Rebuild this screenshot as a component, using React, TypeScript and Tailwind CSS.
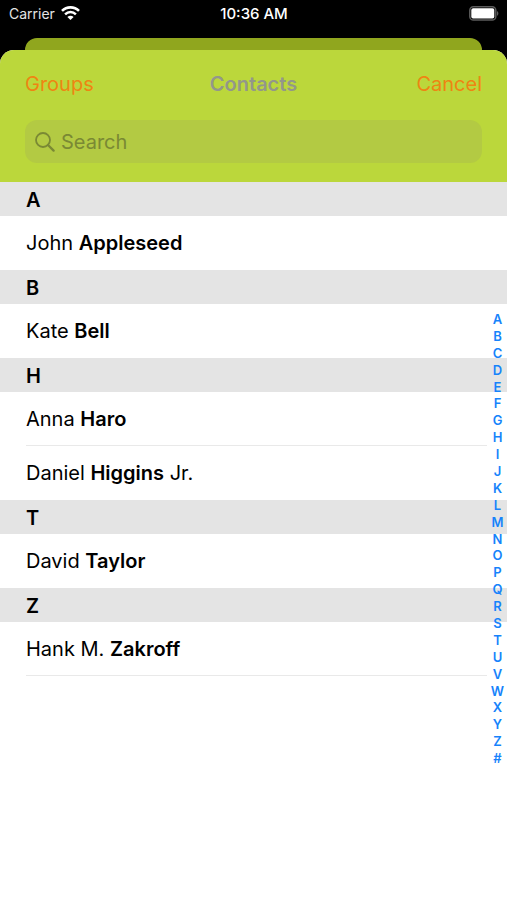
import React, { useState } from 'react';

interface Contact {
  first: string;
  last: string;
  suffix?: string;
}

interface Section {
  letter: string;
  contacts: Contact[];
}

const sections: Section[] = [
  { letter: 'A', contacts: [{ first: 'John', last: 'Appleseed' }] },
  { letter: 'B', contacts: [{ first: 'Kate', last: 'Bell' }] },
  {
    letter: 'H',
    contacts: [
      { first: 'Anna', last: 'Haro' },
      { first: 'Daniel', last: 'Higgins', suffix: 'Jr.' },
    ],
  },
  { letter: 'T', contacts: [{ first: 'David', last: 'Taylor' }] },
  { letter: 'Z', contacts: [{ first: 'Hank M.', last: 'Zakroff' }] },
];

const indexLetters = 'ABCDEFGHIJKLMNOPQRSTUVWXYZ#'.split('');

const WifiIcon = () => (
  <svg width="19" height="16" viewBox="0 0 19 16" fill="none" aria-hidden="true">
    <path d="M1 4.9C5.7 0.2 13.3 0.2 18 4.9" stroke="white" strokeWidth="2.6" />
    <path d="M4.1 8.3C7.2 5.3 11.8 5.3 14.9 8.3" stroke="white" strokeWidth="2.5" />
    <path d="M9.5 14L6.4 10.9C8.2 9.3 10.8 9.3 12.6 10.9Z" fill="white" />
  </svg>
);

const BatteryIcon = () => (
  <svg width="30" height="15" viewBox="0 0 30 15" fill="none" aria-hidden="true">
    <rect x="0.8" y="0.8" width="26" height="13.2" rx="3.6" stroke="#5c5c5c" strokeWidth="1.5" />
    <rect x="2.3" y="2.3" width="23" height="10.2" rx="1.8" fill="white" />
    <path d="M28 5C29.8 5.7 29.8 9.1 28 9.8Z" fill="#5c5c5c" />
  </svg>
);

const SearchIcon = () => (
  <svg width="20" height="20" viewBox="0 0 20 20" fill="none" stroke="#7a8934" strokeWidth="1.8" aria-hidden="true">
    <circle cx="8" cy="8" r="7" />
    <path d="M13 13L18.6 18.6" strokeWidth="2.3" strokeLinecap="round" />
  </svg>
);

const StatusBar = () => (
  <div className="grid h-[38px] grid-cols-3 items-start pt-1 pr-2 pl-[9px] text-[15px] leading-5 text-white">
    <div className="flex h-5 items-center gap-1.5">
      <span className="text-sm text-[#e4e4e4]">Carrier</span>
      <WifiIcon />
    </div>
    <span className="text-center font-medium">10:36 AM</span>
    <div className="flex h-[19px] items-center justify-end">
      <BatteryIcon />
    </div>
  </div>
);

const ContactSection = ({ section, last }: { section: Section; last: boolean }) => (
  <section>
    <h2 className="h-[34px] bg-[#e4e4e4] px-[26px] text-xl leading-[36px] font-semibold">{section.letter}</h2>
    <ul className="pr-5 pl-[26px]">
      {section.contacts.map((contact, i) => (
        <li
          key={contact.last}
          className={
            last || i < section.contacts.length - 1
              ? 'h-[54px] border-b border-[#e9e9e9] text-xl leading-[54px]'
              : 'h-[54px] text-xl leading-[54px]'
          }
        >
          {contact.first} <span className="font-semibold">{contact.last}</span>
          {contact.suffix && ` ${contact.suffix}`}
        </li>
      ))}
    </ul>
  </section>
);

export default function App() {
  const [query, setQuery] = useState('');

  const visible = sections
    .map((section) => ({
      ...section,
      contacts: section.contacts.filter((c) =>
        `${c.first} ${c.last}`.toLowerCase().includes(query.toLowerCase())
      ),
    }))
    .filter((section) => section.contacts.length > 0);

  return (
    <div className="flex min-h-screen flex-col bg-black font-['Inter','Liberation_Sans',sans-serif] text-black">
      <StatusBar />
      {/* Edge of the page that sits behind the sheet */}
      <div className="mx-[25px] h-3 rounded-t-xl bg-[#90a61e]" />
      <main className="flex flex-1 flex-col overflow-hidden rounded-t-[14px] bg-white">
        <header className="bg-[#bbd73b] px-[25px] pb-[19px]">
          <div className="mb-0.5 grid h-[68px] grid-cols-3 items-center text-xl">
            <button type="button" className="justify-self-start text-[#ee8512]">
              Groups
            </button>
            <h1 className="text-center font-semibold text-[#93978a]">Contacts</h1>
            <button type="button" className="justify-self-end text-[#ee8512]">
              Cancel
            </button>
          </div>
          <label className="flex h-[43px] items-center gap-1.5 rounded-xl bg-[#b3ca43] px-2.5">
            <SearchIcon />
            <input
              type="text"
              aria-label="Search"
              placeholder="Search"
              value={query}
              onChange={(e) => setQuery(e.target.value)}
              className="min-w-0 flex-1 bg-transparent text-xl outline-none placeholder:text-[#7a8934]"
            />
          </label>
        </header>
        <div className="relative flex-1">
          {visible.map((section, i) => (
            <ContactSection key={section.letter} section={section} last={i === visible.length - 1} />
          ))}
          <nav aria-label="Index" className="absolute inset-y-0 right-0 flex w-[19px] items-center pb-[5px]">
            <div className="flex h-[456px] w-full flex-col">
              {indexLetters.map((letter) => (
                <a
                  key={letter}
                  href={`#${letter}`}
                  className="flex flex-1 items-center justify-center text-[13px] leading-4 font-semibold text-[#1683fb]"
                >
                  {letter}
                </a>
              ))}
            </div>
          </nav>
        </div>
      </main>
    </div>
  );
}
